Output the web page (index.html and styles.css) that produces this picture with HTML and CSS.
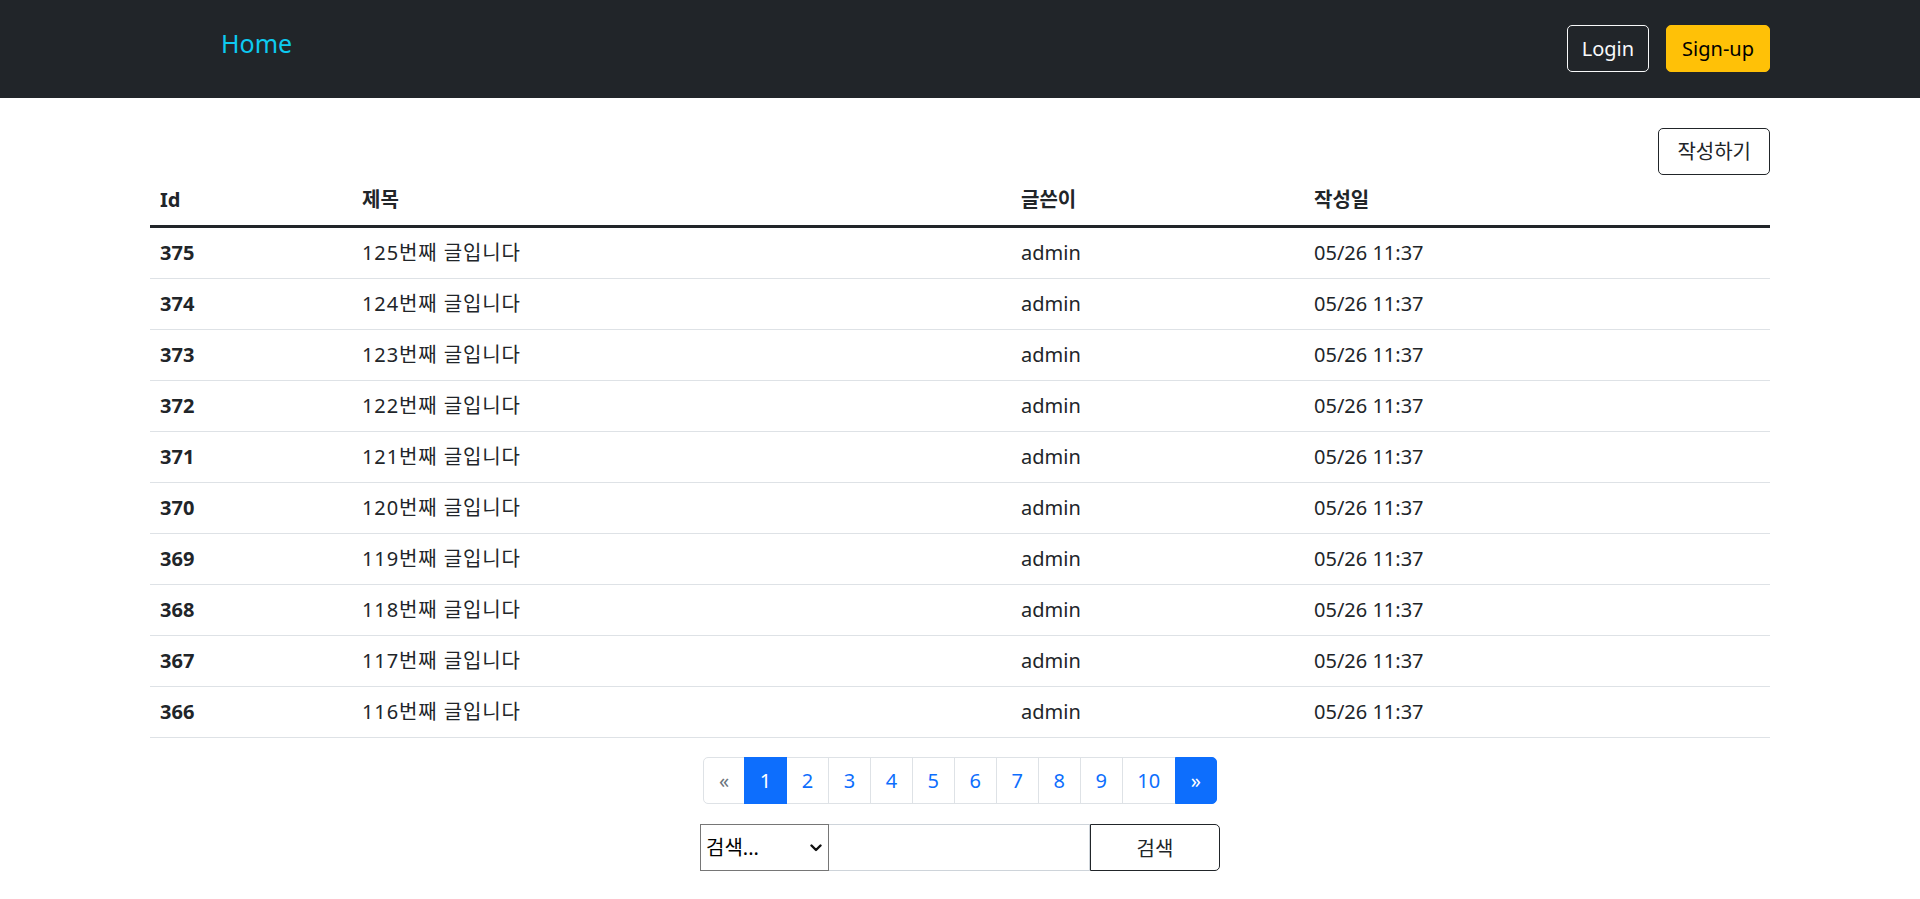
FILE: index.html
```html
<!DOCTYPE html>
<html lang="ko">
<head>
<meta charset="utf-8">
<title>Board</title>
<link rel="stylesheet" href="styles.css">
</head>
<body>
<header class="navbar">
  <div class="container nav-inner">
    <a class="brand" href="#">Home</a>
    <div class="nav-actions">
      <button class="btn btn-outline-light">Login</button>
      <button class="btn btn-warning">Sign-up</button>
    </div>
  </div>
</header>
<main class="container main">
  <div class="toolbar">
    <button class="btn btn-outline-dark">작성하기</button>
  </div>
  <table class="table">
    <thead>
      <tr>
        <th class="col-id">Id</th>
        <th class="col-title">제목</th>
        <th class="col-writer">글쓴이</th>
        <th class="col-date">작성일</th>
      </tr>
    </thead>
    <tbody>
      <tr><th>375</th><td class="title">125번째 글입니다</td><td>admin</td><td>05/26 11:37</td></tr>
      <tr><th>374</th><td class="title">124번째 글입니다</td><td>admin</td><td>05/26 11:37</td></tr>
      <tr><th>373</th><td class="title">123번째 글입니다</td><td>admin</td><td>05/26 11:37</td></tr>
      <tr><th>372</th><td class="title">122번째 글입니다</td><td>admin</td><td>05/26 11:37</td></tr>
      <tr><th>371</th><td class="title">121번째 글입니다</td><td>admin</td><td>05/26 11:37</td></tr>
      <tr><th>370</th><td class="title">120번째 글입니다</td><td>admin</td><td>05/26 11:37</td></tr>
      <tr><th>369</th><td class="title">119번째 글입니다</td><td>admin</td><td>05/26 11:37</td></tr>
      <tr><th>368</th><td class="title">118번째 글입니다</td><td>admin</td><td>05/26 11:37</td></tr>
      <tr><th>367</th><td class="title">117번째 글입니다</td><td>admin</td><td>05/26 11:37</td></tr>
      <tr><th>366</th><td class="title">116번째 글입니다</td><td>admin</td><td>05/26 11:37</td></tr>
    </tbody>
  </table>
  <nav class="pager">
    <ul class="pagination">
      <li class="page-item disabled first"><span class="page-link">&laquo;</span></li>
      <li class="page-item active"><a class="page-link" href="#">1</a></li>
      <li class="page-item"><a class="page-link" href="#">2</a></li>
      <li class="page-item"><a class="page-link" href="#">3</a></li>
      <li class="page-item"><a class="page-link" href="#">4</a></li>
      <li class="page-item"><a class="page-link" href="#">5</a></li>
      <li class="page-item"><a class="page-link" href="#">6</a></li>
      <li class="page-item"><a class="page-link" href="#">7</a></li>
      <li class="page-item"><a class="page-link" href="#">8</a></li>
      <li class="page-item"><a class="page-link" href="#">9</a></li>
      <li class="page-item"><a class="page-link" href="#">10</a></li>
      <li class="page-item active last"><a class="page-link" href="#">&raquo;</a></li>
    </ul>
  </nav>
  <form class="search">
    <div class="select-wrap">
      <select class="search-select">
        <option>검색...</option>
        <option>제목</option>
        <option>글쓴이</option>
      </select>
      <svg class="chevron" width="12" height="8" viewBox="0 0 12 8"><polyline points="1.5,1.5 6,6 10.5,1.5" fill="none" stroke="#111" stroke-width="2.4" stroke-linecap="round" stroke-linejoin="round"/></svg>
    </div>
    <input class="search-input" type="text">
    <button class="search-btn" type="button">검색</button>
  </form>
</main>
</body>
</html>
```

FILE: styles.css
```css
* { box-sizing: border-box; }

body {
  margin: 0;
  font-family: "Noto Sans", "Noto Sans CJK KR", sans-serif;
  font-size: 20px;
  line-height: 30px;
  color: #212529;
  background: #fff;
}

.container {
  width: 1620px;
  margin: 0 auto;
}

.navbar {
  background: #212529;
  height: 98px;
}

.nav-inner {
  display: flex;
  justify-content: space-between;
  align-items: flex-start;
  padding-top: 25px;
}

.brand {
  margin-left: 71px;
  font-size: 25px;
  line-height: 37px;
  color: #0dcaf0;
  text-decoration: none;
}

.nav-actions {
  display: flex;
  gap: 17px;
}

.btn {
  font-family: inherit;
  font-size: 20px;
  line-height: 30px;
  padding: 7.5px 15px;
  border: 1px solid transparent;
  border-radius: 5px;
  background: transparent;
  cursor: pointer;
}

.btn-outline-light {
  color: #f8f9fa;
  border-color: #f8f9fa;
  padding: 7.5px 14px;
}

.btn-warning {
  background: #ffc107;
  border-color: #ffc107;
  color: #000;
}

.btn-outline-dark {
  color: #212529;
  border-color: #212529;
  padding: 7.5px 18px;
}

.main {
  margin-top: 30px;
}

.toolbar {
  display: flex;
  justify-content: flex-end;
}

.table {
  width: 100%;
  border-collapse: collapse;
  margin-bottom: 19px;
}

.table th,
.table td {
  padding: 10px;
  text-align: left;
  vertical-align: top;
  border-bottom: 1px solid #dee2e6;
}

.table thead th {
  font-weight: 700;
  border-bottom: 3px solid #212529;
}

.table tbody th {
  font-weight: 700;
}

.table td.title {
  letter-spacing: 0.9px;
}

.col-id { width: 202px; }
.col-title { width: 659px; }
.col-writer { width: 293px; }

.pager {
  display: flex;
  justify-content: center;
}

.pagination {
  display: flex;
  list-style: none;
  margin: 0;
  padding: 0;
}

.page-link {
  display: block;
  padding: 7.5px 14.75px;
  border: 1px solid #dee2e6;
  margin-left: -1px;
  color: #0d6efd;
  text-decoration: none;
  background: #fff;
  line-height: 30px;
}

.page-item.first .page-link {
  margin-left: 0;
  border-radius: 5px 0 0 5px;
}

.page-item.last .page-link {
  border-radius: 0 5px 5px 0;
}

.page-item.disabled .page-link {
  color: #6c757d;
}

.page-item.active .page-link {
  background: #0d6efd;
  border-color: #0d6efd;
  color: #fff;
  position: relative;
}

.search {
  display: flex;
  justify-content: center;
  margin-top: 20px;
}

.select-wrap {
  position: relative;
  width: 129px;
  height: 47px;
}

.search-select {
  appearance: none;
  -webkit-appearance: none;
  width: 100%;
  height: 100%;
  border: 1px solid #767676;
  border-radius: 0;
  background: #fff;
  font-family: inherit;
  font-size: 20px;
  color: #000;
  padding: 0 0 0 5px;
}

.chevron {
  position: absolute;
  right: 7px;
  top: 20px;
  pointer-events: none;
}

.search-input {
  width: 261px;
  height: 47px;
  border: 1px solid #ced4da;
  border-left: none;
  border-radius: 0;
  font-family: inherit;
  font-size: 20px;
  padding: 0 12px;
}

.search-btn {
  width: 130px;
  height: 47px;
  border: 1px solid #212529;
  border-radius: 0 5px 5px 0;
  background: #fff;
  color: #212529;
  font-family: inherit;
  font-size: 20px;
  cursor: pointer;
}
```
